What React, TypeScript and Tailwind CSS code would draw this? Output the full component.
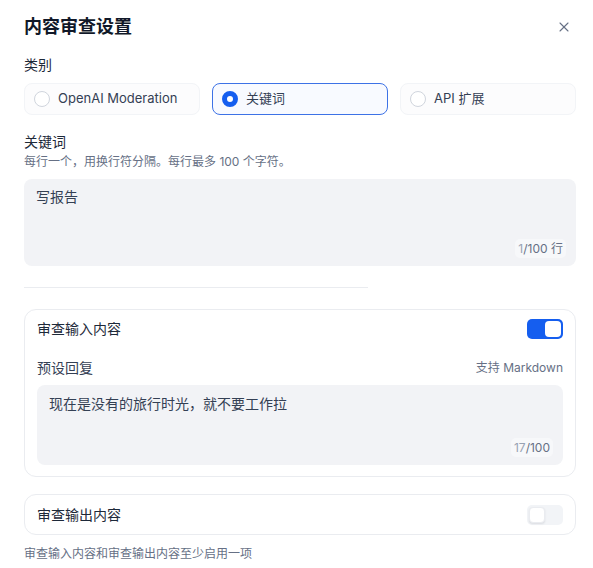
import { X } from "lucide-react";

const TYPES = [
  { id: "openai", label: "OpenAI Moderation" },
  { id: "keywords", label: "关键词" },
  { id: "api", label: "API 扩展" },
] as const;

function Toggle({ on }: { on: boolean }) {
  return (
    <div
      className={`w-9 h-5 rounded-[5px] p-[2px] flex ${
        on ? "bg-[#155eef] justify-end" : "bg-[#f2f4f7] justify-start"
      }`}
    >
      <div
        className={`w-4 h-4 rounded-[4px] bg-white ${
          on ? "" : "shadow-[0_1px_2px_rgba(16,24,40,0.1)] border border-[#eaecf0]"
        }`}
      />
    </div>
  );
}

function Counter({ used, total, suffix }: { used: number; total: number; suffix?: string }) {
  return (
    <div className="absolute right-[10px] bottom-2 h-[19px] px-[3px] rounded-[5px] bg-[#f7f8fa] flex items-center text-xs leading-4">
      <span className="text-[#98a2b3]">{used}</span>
      <span className="text-[#667085]">
        /{total}
        {suffix ? ` ${suffix}` : ""}
      </span>
    </div>
  );
}

export default function App() {
  const selected = "keywords";

  return (
    <div
      className="w-[593px] h-[568px] bg-white pl-6 pr-[17px] pt-[13px] text-[#101828]"
      style={{ fontFamily: 'Inter, "Noto Sans CJK SC", sans-serif' }}
    >
      <div className="h-7 flex items-center justify-between">
        <h1 className="text-lg font-semibold leading-7 text-[#101828]">内容审查设置</h1>
        <X size={16} strokeWidth={1.6} className="text-[#667085] mr-1" />
      </div>

      <div className="mt-[14px] text-sm leading-5 text-[#1d2939]">类别</div>
      <div className="mt-2 grid grid-cols-3 gap-3">
        {TYPES.map((t) => {
          const active = t.id === selected;
          return (
            <div
              key={t.id}
              className={`h-8 rounded-lg flex items-center gap-2 pl-[9px] text-[13px] text-[#344054] ${
                active
                  ? "border-[1.5px] border-[#3d72e6] bg-[#f8faff]"
                  : "border border-[#f2f4f7] bg-[#fcfcfd]"
              }`}
            >
              {active ? (
                <span className="w-4 h-4 rounded-full border-[5px] border-[#155eef] bg-white" />
              ) : (
                <span className="w-4 h-4 rounded-full border border-[#d0d5dd] bg-white" />
              )}
              <span>{t.label}</span>
            </div>
          );
        })}
      </div>

      <div className="mt-[17px] text-sm leading-5 text-[#1d2939]">关键词</div>
      <div className="mt-px text-xs leading-[18px] text-[#667085]">
        每行一个，用换行符分隔。每行最多 100 个字符。
      </div>
      <div className="relative mt-2 h-[87px] rounded-lg bg-[#f2f3f6] px-3 pt-2 text-sm leading-5 text-[#344054]">
        写报告
        <Counter used={1} total={100} suffix="行" />
      </div>

      <div className="mt-[21px] w-[344px] h-px bg-[#eaecf0]" />

      <div className="mt-[21px] rounded-xl border border-[#eaecf0] px-3 pt-[9px] pb-[11px]">
        <div className="h-5 flex items-center justify-between">
          <span className="text-sm text-[#1d2939]">审查输入内容</span>
          <Toggle on />
        </div>
        <div className="mt-5 h-[18px] flex items-center justify-between">
          <span className="text-sm text-[#344054]">预设回复</span>
          <span className="text-xs text-[#667085]">支持 Markdown</span>
        </div>
        <div className="relative mt-2 h-20 rounded-lg bg-[#f2f3f6] px-3 pt-[9px] text-sm leading-5 text-[#344054]">
          现在是没有的旅行时光，就不要工作拉
          <Counter used={17} total={100} />
        </div>
      </div>

      <div className="mt-[17px] h-[41px] rounded-xl border border-[#eaecf0] px-3 flex items-center justify-between">
        <span className="text-sm text-[#1d2939]">审查输出内容</span>
        <Toggle on={false} />
      </div>

      <div className="mt-[11px] text-xs leading-4 text-[#667085]">审查输入内容和审查输出内容至少启用一项</div>
    </div>
  );
}
